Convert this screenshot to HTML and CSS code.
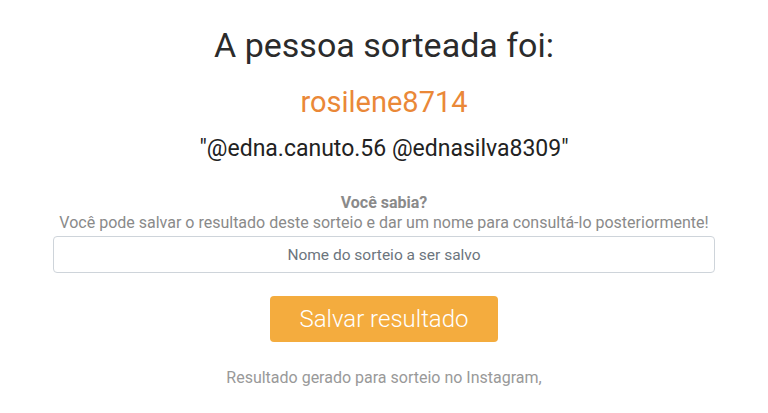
FILE: index.html
```html
<!DOCTYPE html>
<html lang="pt-BR">

<head>
    <meta charset="UTF-8">
    <meta name="viewport" content="width=device-width, initial-scale=1.0">
    <title>Resultado do sorteio</title>
    <link rel="stylesheet" href="styles.css">
</head>

<body>
    <main class="result">
        <h1 class="result-title">A pessoa sorteada foi:</h1>
        <h2 class="winner">rosilene8714</h2>
        <p class="comment">"@edna.canuto.56 @ednasilva8309"</p>

        <div class="save-box">
            <p class="tip-title">Você sabia?</p>
            <p class="tip-text">Você pode salvar o resultado deste sorteio e dar um nome para consultá-lo posteriormente!</p>
            <input class="save-input" type="text" placeholder="Nome do sorteio a ser salvo">
            <button class="save-button">Salvar resultado</button>
        </div>

        <p class="footer-note">Resultado gerado para sorteio no Instagram,</p>
    </main>
</body>

</html>
```

FILE: styles.css
```css
* {
    padding: 0;
    margin: 0;
    box-sizing: border-box;
    font-family: Roboto, "Liberation Sans", sans-serif;
}

body {
    background-color: #fff;
    color: #212529;
}

.result {
    display: flex;
    flex-direction: column;
    align-items: center;
    text-align: center;
    padding-top: 25px;
}

.result-title {
    font-size: 34px;
    font-weight: 400;
    line-height: 40px;
    color: #2b2b2b;
}

.winner {
    margin-top: 20px;
    font-size: 29px;
    font-weight: 400;
    line-height: 34px;
    color: #ea8838;
}

.comment {
    margin-top: 16px;
    font-size: 23px;
    line-height: 28px;
    color: #222;
}

.save-box {
    display: flex;
    flex-direction: column;
    align-items: center;
    width: 662px;
    margin-top: 30px;
}

.tip-title {
    font-size: 16px;
    font-weight: 700;
    line-height: 20px;
    color: #8a8a8a;
}

.tip-text {
    font-size: 16px;
    line-height: 20px;
    color: #8a8a8a;
}

.save-input {
    width: 100%;
    height: 37px;
    margin-top: 3px;
    padding: 0 12px;
    border: 1px solid #ced4da;
    border-radius: 4px;
    font-size: 15.5px;
    text-align: center;
    color: #495057;
}

.save-input::placeholder {
    color: #6c757d;
}

.save-button {
    width: 228px;
    height: 46px;
    margin-top: 23px;
    border: none;
    border-radius: 4px;
    background-color: #f4ac3e;
    color: #fff;
    font-size: 24px;
    font-weight: 300;
    cursor: pointer;
}

.footer-note {
    margin-top: 25px;
    font-size: 16px;
    line-height: 22px;
    color: #999;
}
```
